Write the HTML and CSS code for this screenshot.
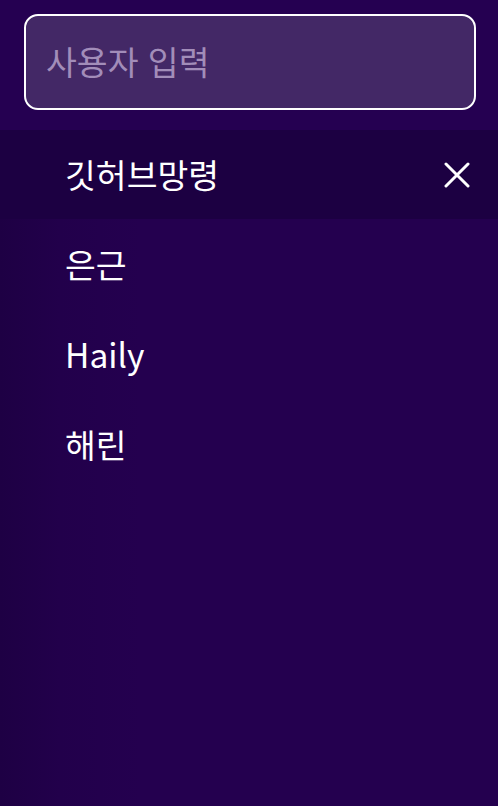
FILE: index.html
```html
<!DOCTYPE html>
<html lang="ko">
<head>
<meta charset="utf-8">
<link rel="stylesheet" href="styles.css">
</head>
<body>
<div class="app">
  <header class="top">
    <div class="search"><span class="placeholder">사용자 입력</span></div>
  </header>
  <ul class="list">
    <li class="item selected"><span class="name">깃허브망령</span>
      <svg class="close" width="26" height="26" viewBox="0 0 26 26"><path d="M2 2L24 24M24 2L2 24" stroke="#fff" stroke-width="3" stroke-linecap="round" fill="none"/></svg>
    </li>
    <li class="item"><span class="name">은근</span></li>
    <li class="item"><span class="name">Haily</span></li>
    <li class="item"><span class="name">해린</span></li>
  </ul>
</div>
</body>
</html>
```
FILE: styles.css
```css
html, body { margin: 0; padding: 0; }
body {
  width: 498px;
  height: 806px;
  background: #24004f;
  font-family: "Noto Sans CJK KR", "Noto Sans", sans-serif;
  overflow: hidden;
}
.app { display: flex; flex-direction: column; height: 806px; }
.top {
  background: #250051;
  padding: 14px 22px 20px 24px;
  height: 96px;
}
.search {
  box-sizing: border-box;
  height: 96px;
  border: 2px solid #ffffff;
  border-radius: 14px;
  background: #432866;
  display: flex;
  align-items: center;
  padding-left: 20px;
}
.placeholder {
  color: #a28db9;
  font-size: 33.5px;
  line-height: 1;
  margin-top: -3px;
}
.list {
  list-style: none;
  margin: 0;
  padding: 0;
  flex: 1;
  background: linear-gradient(to right, #1e0044 0px, #22004b 60px, #24004f 140px, #24004f 100%);
}
.item {
  height: 90px;
  display: flex;
  align-items: center;
  justify-content: space-between;
  padding: 0 28px 0 65px;
  color: #ffffff;
  font-size: 33.5px;
  font-weight: 400;
}
.item.selected { background: #1c0042; height: 89px; }
.name { line-height: 1; margin-top: -1px; }
.close { display: block; }
```
